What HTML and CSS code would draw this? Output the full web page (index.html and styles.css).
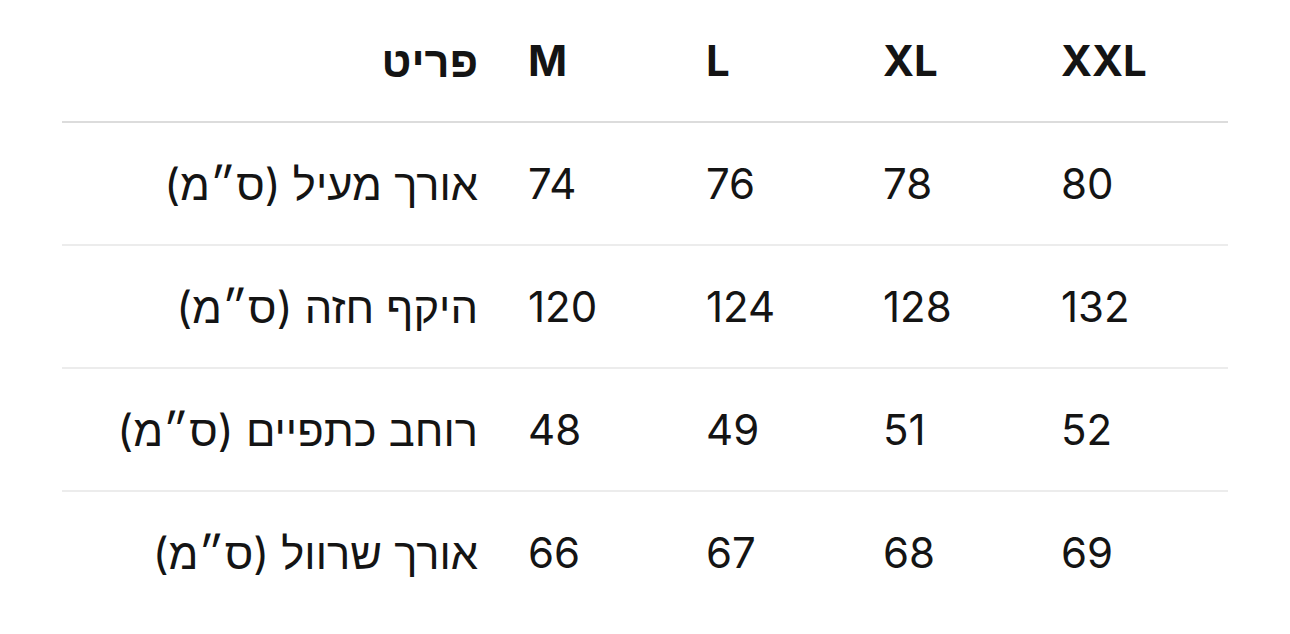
FILE: index.html
```html
<!DOCTYPE html>
<html lang="he">
<head>
<meta charset="utf-8">
<link rel="stylesheet" href="styles.css">
</head>
<body>
<table class="sizes">
  <colgroup>
    <col class="c-label"><col class="c-m"><col class="c-l"><col class="c-xl"><col class="c-xxl">
  </colgroup>
  <thead>
    <tr><th class="label" dir="rtl">פריט</th><th>M</th><th>L</th><th>XL</th><th>XXL</th></tr>
  </thead>
  <tbody>
    <tr><td class="label" dir="rtl">אורך מעיל (ס״מ)</td><td>74</td><td>76</td><td>78</td><td>80</td></tr>
    <tr><td class="label" dir="rtl">היקף חזה (ס״מ)</td><td>120</td><td>124</td><td>128</td><td>132</td></tr>
    <tr><td class="label" dir="rtl">רוחב כתפיים (ס״מ)</td><td>48</td><td>49</td><td>51</td><td>52</td></tr>
    <tr><td class="label" dir="rtl">אורך שרוול (ס״מ)</td><td>66</td><td>67</td><td>68</td><td>69</td></tr>
  </tbody>
</table>
</body>
</html>
```
FILE: styles.css
```css
html, body {
  margin: 0;
  padding: 0;
  background: #ffffff;
}
body {
  font-family: Inter, "Liberation Sans", sans-serif;
  color: #141414;
  padding: 0 62px;
}
.sizes {
  width: 1166px;
  border-collapse: collapse;
  table-layout: fixed;
  font-size: 42px;
}
.c-label { width: 441px; }
.c-m { width: 178px; }
.c-l { width: 177px; }
.c-xl { width: 178px; }
.c-xxl { width: 192px; }
.sizes th, .sizes td {
  padding: 0 0 0 25px;
  text-align: left;
  vertical-align: middle;
  font-weight: 400;
}
.sizes th {
  font-weight: 700;
  height: 121px;
  border-bottom: 2px solid #dcdcdc;
}
.sizes td {
  height: 121px;
  border-bottom: 2px solid #ececec;
}
.sizes tbody tr:last-child td {
  border-bottom: none;
}
.sizes .label {
  text-align: right;
  padding: 0 25px 0 0;
  font-size: 43.5px;
}
```
